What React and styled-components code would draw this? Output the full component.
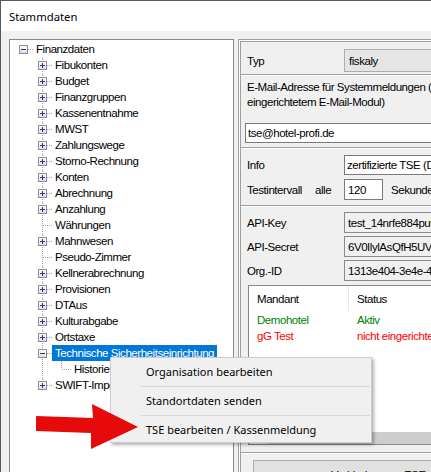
import React from "react";
import styled, { createGlobalStyle, css } from "styled-components";

const narrow = `"Liberation Sans Narrow", "Arial Narrow", "Liberation Sans", Arial, sans-serif`;
const ui = `"Noto Sans", "Open Sans", sans-serif`;

const GlobalStyle = createGlobalStyle`
  html, body { margin: 0; padding: 0; background: #f0f0f0; overflow: hidden; }
  #root { width: 431px; height: 472px; }
  * { box-sizing: border-box; }
`;

const Window = styled.div`
  position: relative;
  width: 431px;
  height: 472px;
  overflow: hidden;
  background: #f0f0f0;
  border-top: 1px solid #4c5a66;
  border-left: 1px solid #4c5a66;
  display: flex;
  flex-direction: column;
  font-family: ${narrow};
  font-size: 11.5px;
  letter-spacing: -0.45px;
  color: #000;
`;

const TitleBar = styled.div`
  height: 30px;
  flex: none;
  background: #fff;
  display: flex;
  align-items: center;
  padding-left: 8px;
  font-family: ${ui};
  font-size: 11.3px;
  letter-spacing: 0;
`;

const Body = styled.div`
  flex: 1;
  min-height: 0;
  display: flex;
  padding: 8px 0 0 8px;
`;

const TreePanel = styled.div`
  flex: none;
  width: 225px;
  margin-bottom: -12px;
  border: 1px solid #828790;
  background: #fff;
  padding-top: 1px;
`;

const Row = styled.div`
  display: flex;
  height: 16px;
  padding-left: 4px;
`;

const dots = (dir) =>
  `repeating-linear-gradient(${dir}, #a0a0a0 0 1px, transparent 1px 2px)`;

const Cell = styled.div`
  position: relative;
  flex: none;
  width: 19px;
  height: 16px;
  display: flex;
  align-items: center;
  padding-left: 5px;
  ${(p) =>
    p.$vline &&
    css`
      &::before {
        content: "";
        position: absolute;
        left: 9px;
        top: 0;
        width: 1px;
        height: ${p.$vline === "half" ? 8 : 16}px;
        background: ${dots("to bottom")};
      }
    `}
  ${(p) =>
    p.$hline &&
    css`
      &::after {
        content: "";
        position: absolute;
        left: 10px;
        right: 0;
        top: 8px;
        height: 1px;
        background: ${dots("to right")};
      }
    `}
`;

const ExpanderIcon = styled.svg`
  position: relative;
  z-index: 1;
  display: block;
`;

const Expander = ({ open }) => (
  <ExpanderIcon width="9" height="9" viewBox="0 0 9 9">
    <defs>
      <linearGradient id="expg" x1="0" y1="0" x2="0" y2="1">
        <stop offset="0" stopColor="#ffffff" />
        <stop offset="1" stopColor="#dcdcdc" />
      </linearGradient>
    </defs>
    <rect x="0.5" y="0.5" width="8" height="8" fill="url(#expg)" stroke="#8e8f8f" />
    <path d="M2 4.5h5" stroke="#1f3a8a" />
    {!open && <path d="M4.5 2v5" stroke="#1f3a8a" />}
  </ExpanderIcon>
);

const NodeLabel = styled.div`
  height: 16px;
  line-height: 16px;
  padding: 0 3px;
  white-space: nowrap;
  ${(p) =>
    p.$selected &&
    css`
      background: #0078d7;
      color: #fff;
    `}
`;

const tree = [
  { label: "Finanzdaten", level: 0, exp: "minus", last: true },
  { label: "Fibukonten", level: 1, exp: "plus" },
  { label: "Budget", level: 1, exp: "plus" },
  { label: "Finanzgruppen", level: 1, exp: "plus" },
  { label: "Kassenentnahme", level: 1, exp: "plus" },
  { label: "MWST", level: 1, exp: "plus" },
  { label: "Zahlungswege", level: 1, exp: "plus" },
  { label: "Storno-Rechnung", level: 1, exp: "plus" },
  { label: "Konten", level: 1, exp: "plus" },
  { label: "Abrechnung", level: 1, exp: "plus" },
  { label: "Anzahlung", level: 1, exp: "plus" },
  { label: "Währungen", level: 1 },
  { label: "Mahnwesen", level: 1, exp: "plus" },
  { label: "Pseudo-Zimmer", level: 1 },
  { label: "Kellnerabrechnung", level: 1, exp: "plus" },
  { label: "Provisionen", level: 1, exp: "plus" },
  { label: "DTAus", level: 1, exp: "plus" },
  { label: "Kulturabgabe", level: 1, exp: "plus" },
  { label: "Ortstaxe", level: 1, exp: "plus" },
  { label: "Technische Sicherheitseinrichtung", level: 1, exp: "minus", selected: true },
  { label: "Historie", level: 2, last: true, parents: [1] },
  { label: "SWIFT-Import", level: 1, exp: "plus", last: true },
];

const TreeRow = ({ node }) => {
  const guides = [];
  for (let l = 0; l < node.level; l++) {
    const cont = node.parents && node.parents.includes(l);
    guides.push(<Cell key={l} $vline={cont ? "full" : null} />);
  }
  const vline = node.level === 0 ? null : node.last ? "half" : "full";
  return (
    <Row>
      {guides}
      <Cell $vline={vline} $hline>
        {node.exp && <Expander open={node.exp === "minus"} />}
      </Cell>
      <NodeLabel $selected={node.selected}>{node.label}</NodeLabel>
    </Row>
  );
};

const RightPanel = styled.div`
  flex: none;
  width: 262px;
  margin-left: 4px;
  border-top: 1px solid #a0a0a0;
  border-left: 1px solid #a0a0a0;
  box-shadow: inset 1px 1px 0 #fff, inset 2px 2px 0 #a0a0a0;
  padding: 2px 0 0 2px;
  display: flex;
  flex-direction: column;
`;

const Section = styled.div`
  flex: none;
  display: flex;
  flex-direction: column;
  padding: ${(p) => p.$pad};
  gap: ${(p) => p.$gap || 0}px;
`;

const Etched = styled.div`
  flex: none;
  height: 2px;
  border-top: 1px solid #a0a0a0;
  border-bottom: 1px solid #fff;
`;

const FormRow = styled.div`
  display: flex;
  align-items: center;
  height: ${(p) => p.$h}px;
`;

const Label = styled.div`
  flex: none;
  width: 97px;
  white-space: nowrap;
`;

const Sub = styled.span`
  display: inline-block;
  width: ${(p) => p.$w}px;
`;

const Field = styled.div`
  height: ${(p) => p.$h}px;
  ${(p) => (p.$w ? `width: ${p.$w}px; flex: none;` : "flex: 1;")}
  border: 1px solid ${(p) => p.$border || "#7a7a7a"};
  background: ${(p) => p.$bg || "#fff"};
  padding-left: ${(p) => p.$pl || 2}px;
  display: flex;
  align-items: center;
  white-space: nowrap;
  overflow: hidden;
`;

const MultiLine = styled.div`
  line-height: 15px;
  white-space: nowrap;
`;

const EmailField = styled(Field)`
  flex: none;
  margin: 13px 0 0 -2px;
`;

const Unit = styled.span`
  margin-left: 8px;
  white-space: nowrap;
`;

const ListBox = styled.div`
  margin: 1px 0 0 1px;
  height: 160px;
  border: 1px solid #828790;
  background: #fff;
  display: flex;
  flex-direction: column;
  overflow: hidden;
`;

const ListHeader = styled.div`
  display: flex;
  height: 25px;
  flex: none;
  margin-bottom: 1px;
`;

const HeadCell = styled.div`
  flex: none;
  width: ${(p) => p.$w}px;
  padding-left: 8px;
  display: flex;
  align-items: center;
  white-space: nowrap;
  ${(p) => p.$divider && "border-right: 1px solid #e5e5e5;"}
`;

const ListRow = styled.div`
  display: flex;
  height: 16px;
  line-height: 16px;
  color: ${(p) => p.$color};
`;

const ListCell = styled.div`
  flex: none;
  width: ${(p) => p.$w}px;
  padding-left: 8px;
  white-space: nowrap;
`;

const ListFill = styled.div`
  flex: 1;
`;

const HScroll = styled.div`
  flex: none;
  height: 12px;
  display: flex;
`;

const ScrollBtn = styled.div`
  width: 18px;
  background: #f0f0f0;
`;

const ScrollThumb = styled.div`
  flex: 1;
  background: #cdcdcd;
`;

const Button = styled.div`
  margin-left: 3px;
  height: 30px;
  width: 300px;
  border: 1px solid #adadad;
  background: #e1e1e1;
  display: flex;
  align-items: center;
  padding-left: 77px;
  white-space: nowrap;
`;

const Menu = styled.div`
  position: absolute;
  left: 109px;
  top: 356px;
  width: 262px;
  padding: 1px 0;
  background: #f0f0f0;
  border: 1px solid #cccccc;
  box-shadow: 2px 2px 3px rgba(0, 0, 0, 0.3);
  font-family: ${ui};
  font-size: 11px;
  letter-spacing: 0;
  z-index: 5;
`;

const MenuItem = styled.div`
  height: 24px;
  display: flex;
  align-items: center;
  padding-left: 35px;
  white-space: nowrap;
`;

const MenuSep = styled.div`
  height: 1px;
  margin: 3px 1px 1px 30px;
  background: #d7d7d7;
`;

const ArrowSvg = styled.svg`
  position: absolute;
  left: 29px;
  top: 397px;
  z-index: 6;
`;

export default function App() {
  return (
    <>
      <GlobalStyle />
      <Window>
        <TitleBar>Stammdaten</TitleBar>
        <Body>
          <TreePanel>
            {tree.map((n) => (
              <TreeRow key={n.label} node={n} />
            ))}
          </TreePanel>
          <RightPanel>
            <Section $pad="7px 0 2px 6px">
              <FormRow $h={23}>
                <Label>Typ</Label>
                <Field $h={23} $bg="#e5e5e5" $border="#adadad" $pl={4}>
                  fiskaly
                </Field>
              </FormRow>
            </Section>
            <Etched />
            <Section $pad="4px 0 4px 6px">
              <MultiLine>
                E-Mail-Adresse für Systemmeldungen (für Hotels mit
                <br />
                eingerichtetem E-Mail-Modul)
              </MultiLine>
              <EmailField $h={20}>tse@hotel-profi.de</EmailField>
            </Section>
            <Etched />
            <Section $pad="6px 0 5px 6px" $gap={4}>
              <FormRow $h={20}>
                <Label>Info</Label>
                <Field $h={20} $pl={2}>
                  zertifizierte TSE (Deutschland)
                </Field>
              </FormRow>
              <FormRow $h={21}>
                <Label>
                  <Sub $w={68}>Testintervall</Sub>alle
                </Label>
                <Field $h={21} $w={39} $pl={3}>
                  120
                </Field>
                <Unit>Sekunden</Unit>
              </FormRow>
            </Section>
            <Etched />
            <Section $pad="5px 0 7px 6px" $gap={3}>
              <FormRow $h={21}>
                <Label>API-Key</Label>
                <Field $h={21} $bg="#f0f0f0" $border="#8a8a8a" $pl={3}>
                  test_14nrfe884pu0
                </Field>
              </FormRow>
              <FormRow $h={21}>
                <Label>API-Secret</Label>
                <Field $h={21} $bg="#f0f0f0" $border="#8a8a8a" $pl={3}>
                  6V0IlylAsQfH5UVh
                </Field>
              </FormRow>
              <FormRow $h={21}>
                <Label>Org.-ID</Label>
                <Field $h={21} $bg="#f0f0f0" $border="#8a8a8a" $pl={3}>
                  1313e404-3e4e-4a1b
                </Field>
              </FormRow>
              <ListBox>
                <ListHeader>
                  <HeadCell $w={100} $divider>
                    Mandant
                  </HeadCell>
                  <HeadCell $w={150}>Status</HeadCell>
                </ListHeader>
                <ListRow $color="#008000">
                  <ListCell $w={100}>Demohotel</ListCell>
                  <ListCell $w={150}>Aktiv</ListCell>
                </ListRow>
                <ListRow $color="#ff0000">
                  <ListCell $w={100}>gG Test</ListCell>
                  <ListCell $w={150}>nicht eingerichtet</ListCell>
                </ListRow>
                <ListFill />
                <HScroll>
                  <ScrollBtn />
                  <ScrollThumb />
                </HScroll>
              </ListBox>
            </Section>
            <Etched />
            <Section $pad="6px 0 0 9px">
              <Button>Verbindung zur TSE</Button>
            </Section>
          </RightPanel>
        </Body>
        <Menu>
          <MenuItem>Organisation bearbeiten</MenuItem>
          <MenuSep />
          <MenuItem>Standortdaten senden</MenuItem>
          <MenuSep />
          <MenuItem>TSE bearbeiten / Kassenmeldung</MenuItem>
        </Menu>
        <ArrowSvg width="112" height="54" viewBox="0 0 112 54">
          <polygon
            points="6,18 63,20 62,6 108,29 61,51 61,35 6,33"
            fill="#e60a0a"
          />
        </ArrowSvg>
      </Window>
    </>
  );
}
